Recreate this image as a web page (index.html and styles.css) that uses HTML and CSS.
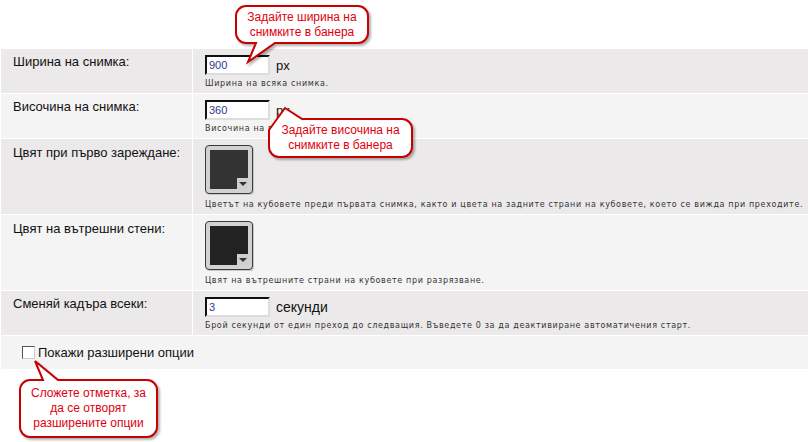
FILE: index.html
```html
<!DOCTYPE html>
<html>
<head>
    <title>Настройки на банера</title>
    <link rel="stylesheet" href="styles.css">
</head>
<body>
    <div class="page">
        <div class="options">
            <div class="row odd">
                <div class="label">Ширина на снимка:</div>
                <div class="field">
                    <div class="line"><input class="num" type="text" value="900"> <span class="unit">px</span></div>
                    <div class="hint">Ширина на всяка снимка.</div>
                </div>
            </div>
            <div class="row even">
                <div class="label">Височина на снимка:</div>
                <div class="field">
                    <div class="line"><input class="num" type="text" value="360"> <span class="unit">px</span></div>
                    <div class="hint">Височина на всяка снимка.</div>
                </div>
            </div>
            <div class="row odd tall">
                <div class="label">Цвят при първо зареждане:</div>
                <div class="field">
                    <div class="swatch"><div class="fill"></div><div class="drop"></div></div>
                    <div class="hint">Цветът на кубовете преди първата снимка, както и цвета на задните страни на кубовете, което се вижда при преходите.</div>
                </div>
            </div>
            <div class="row even tall">
                <div class="label">Цвят на вътрешни стени:</div>
                <div class="field">
                    <div class="swatch"><div class="fill darker"></div><div class="drop"></div></div>
                    <div class="hint">Цвят на вътрешните страни на кубовете при разрязване.</div>
                </div>
            </div>
            <div class="row odd">
                <div class="label">Сменяй кадъра всеки:</div>
                <div class="field">
                    <div class="line"><input class="num" type="text" value="3"> <span class="unit big">секунди</span></div>
                    <div class="hint">Брой секунди от един преход до следващия. Въведете 0 за да деактивиране автоматичения старт.</div>
                </div>
            </div>
            <div class="row even wide">
                <label class="check"><span class="box"></span>Покажи разширени опции</label>
            </div>
        </div>

        <!-- балончета с подсказки -->
        <div class="callout c-width">
            <svg width="134" height="39" overflow="visible"><path d="M11,1 H123 A10,10 0 0 1 133,11 V28 A10,10 0 0 1 123,38 H40 L13,57 L21,38 H11 A10,10 0 0 1 1,28 V11 A10,10 0 0 1 11,1 Z"/></svg>
            <span>Задайте ширина на<br>снимките в банера</span>
        </div>
        <div class="callout c-height">
            <svg width="145" height="40" overflow="visible"><path d="M1,12 L17,-10 L34,1 H134 A10,10 0 0 1 144,11 V29 A10,10 0 0 1 134,39 H11 A10,10 0 0 1 1,29 Z"/></svg>
            <span>Задайте височина на<br>снимките в банера</span>
        </div>
        <div class="callout c-check">
            <svg width="139" height="59" overflow="visible"><path d="M11,1 H24 L16,-18 L39,1 H128 A10,10 0 0 1 138,11 V48 A10,10 0 0 1 128,58 H11 A10,10 0 0 1 1,48 V11 A10,10 0 0 1 11,1 Z"/></svg>
            <span>Сложете отметка, за<br>да се отворят<br>разширените опции</span>
        </div>
    </div>
</body>
</html>
```

FILE: styles.css
```css
body {
    margin: 0;
    background: #fff;
    font-family: 'Liberation Sans', Arial, sans-serif;
    color: #111;
}
.page {
    position: relative;
    width: 808px;
    height: 442px;
    padding-top: 49px;
    box-sizing: border-box;
    overflow: hidden;
}
.options {
    display: flex;
    flex-direction: column;
    gap: 1px;
    padding-left: 1px;
}
.row {
    display: grid;
    grid-template-columns: 191px 1fr;
    column-gap: 1px;
    height: 44px;
}
.row.tall {
    height: 75px;
}
.row.odd > div {
    background: #ebe9ea;
}
.row.even > div,
.row.wide {
    background: #f4f4f4;
}
.label {
    font-size: 13px;
    padding: 5px 0 0 12px;
}
.row.tall .label {
    padding-top: 6px;
}
.field {
    padding: 6px 0 0 12px;
}
.line {
    display: flex;
    align-items: center;
    gap: 6px;
    height: 20px;
}
.num {
    width: 65px;
    height: 20px;
    box-sizing: border-box;
    margin: 0;
    padding: 0 2px;
    border: 2px inset #ddd;
    border-top-color: #666;
    border-left-color: #666;
    background: #fff;
    font-family: 'Liberation Sans', Arial, sans-serif;
    font-size: 11px;
    color: #2a3a8c;
}
.unit {
    font-size: 13px;
}
.unit.big {
    font-size: 14px;
}
.hint {
    margin-top: 4px;
    font-family: 'DejaVu Sans', Verdana, sans-serif;
    font-size: 8px;
    letter-spacing: 0.65px;
    color: #333;
    white-space: nowrap;
}
.swatch {
    position: relative;
    width: 48px;
    height: 49px;
    box-sizing: border-box;
    padding: 4px;
    border: 1px solid #3a3a3a;
    border-radius: 4px;
    background: #d2d2d2;
    box-shadow: 1px 1px 0 #c8c8c8;
    margin-bottom: 6px;
}
.fill {
    width: 100%;
    height: 100%;
    background: #333;
}
.fill.darker {
    background: #222;
}
.drop {
    position: absolute;
    right: 4px;
    bottom: 4px;
    width: 11px;
    height: 11px;
    background: #cfcfcf;
}
.drop::after {
    content: '';
    position: absolute;
    left: 2px;
    top: 4px;
    border-left: 4px solid transparent;
    border-right: 4px solid transparent;
    border-top: 4px solid #333;
}
.row.wide {
    display: flex;
    align-items: center;
    padding-left: 21px;
    height: 33px;
}
.check {
    display: flex;
    align-items: center;
    gap: 3px;
    font-size: 13px;
}
.box {
    width: 11px;
    height: 11px;
    border: 1px solid #555;
    border-right-color: #ccc;
    border-bottom-color: #ccc;
    background: #fff;
}
.callout {
    position: absolute;
    display: flex;
    align-items: center;
    justify-content: center;
    text-align: center;
    font-size: 12px;
    line-height: 15px;
    color: #e0000f;
}
.callout svg {
    position: absolute;
    left: 0;
    top: 0;
    filter: drop-shadow(2px 2px 1px rgba(0, 0, 0, 0.3));
}
.callout path {
    fill: #fff;
    stroke: #c80000;
    stroke-width: 2;
}
.callout span {
    position: relative;
}
.c-width {
    left: 235px;
    top: 5px;
    width: 134px;
    height: 39px;
}
.c-height {
    left: 268px;
    top: 118px;
    width: 145px;
    height: 40px;
}
.c-check {
    left: 19px;
    top: 379px;
    width: 139px;
    height: 59px;
}
```
